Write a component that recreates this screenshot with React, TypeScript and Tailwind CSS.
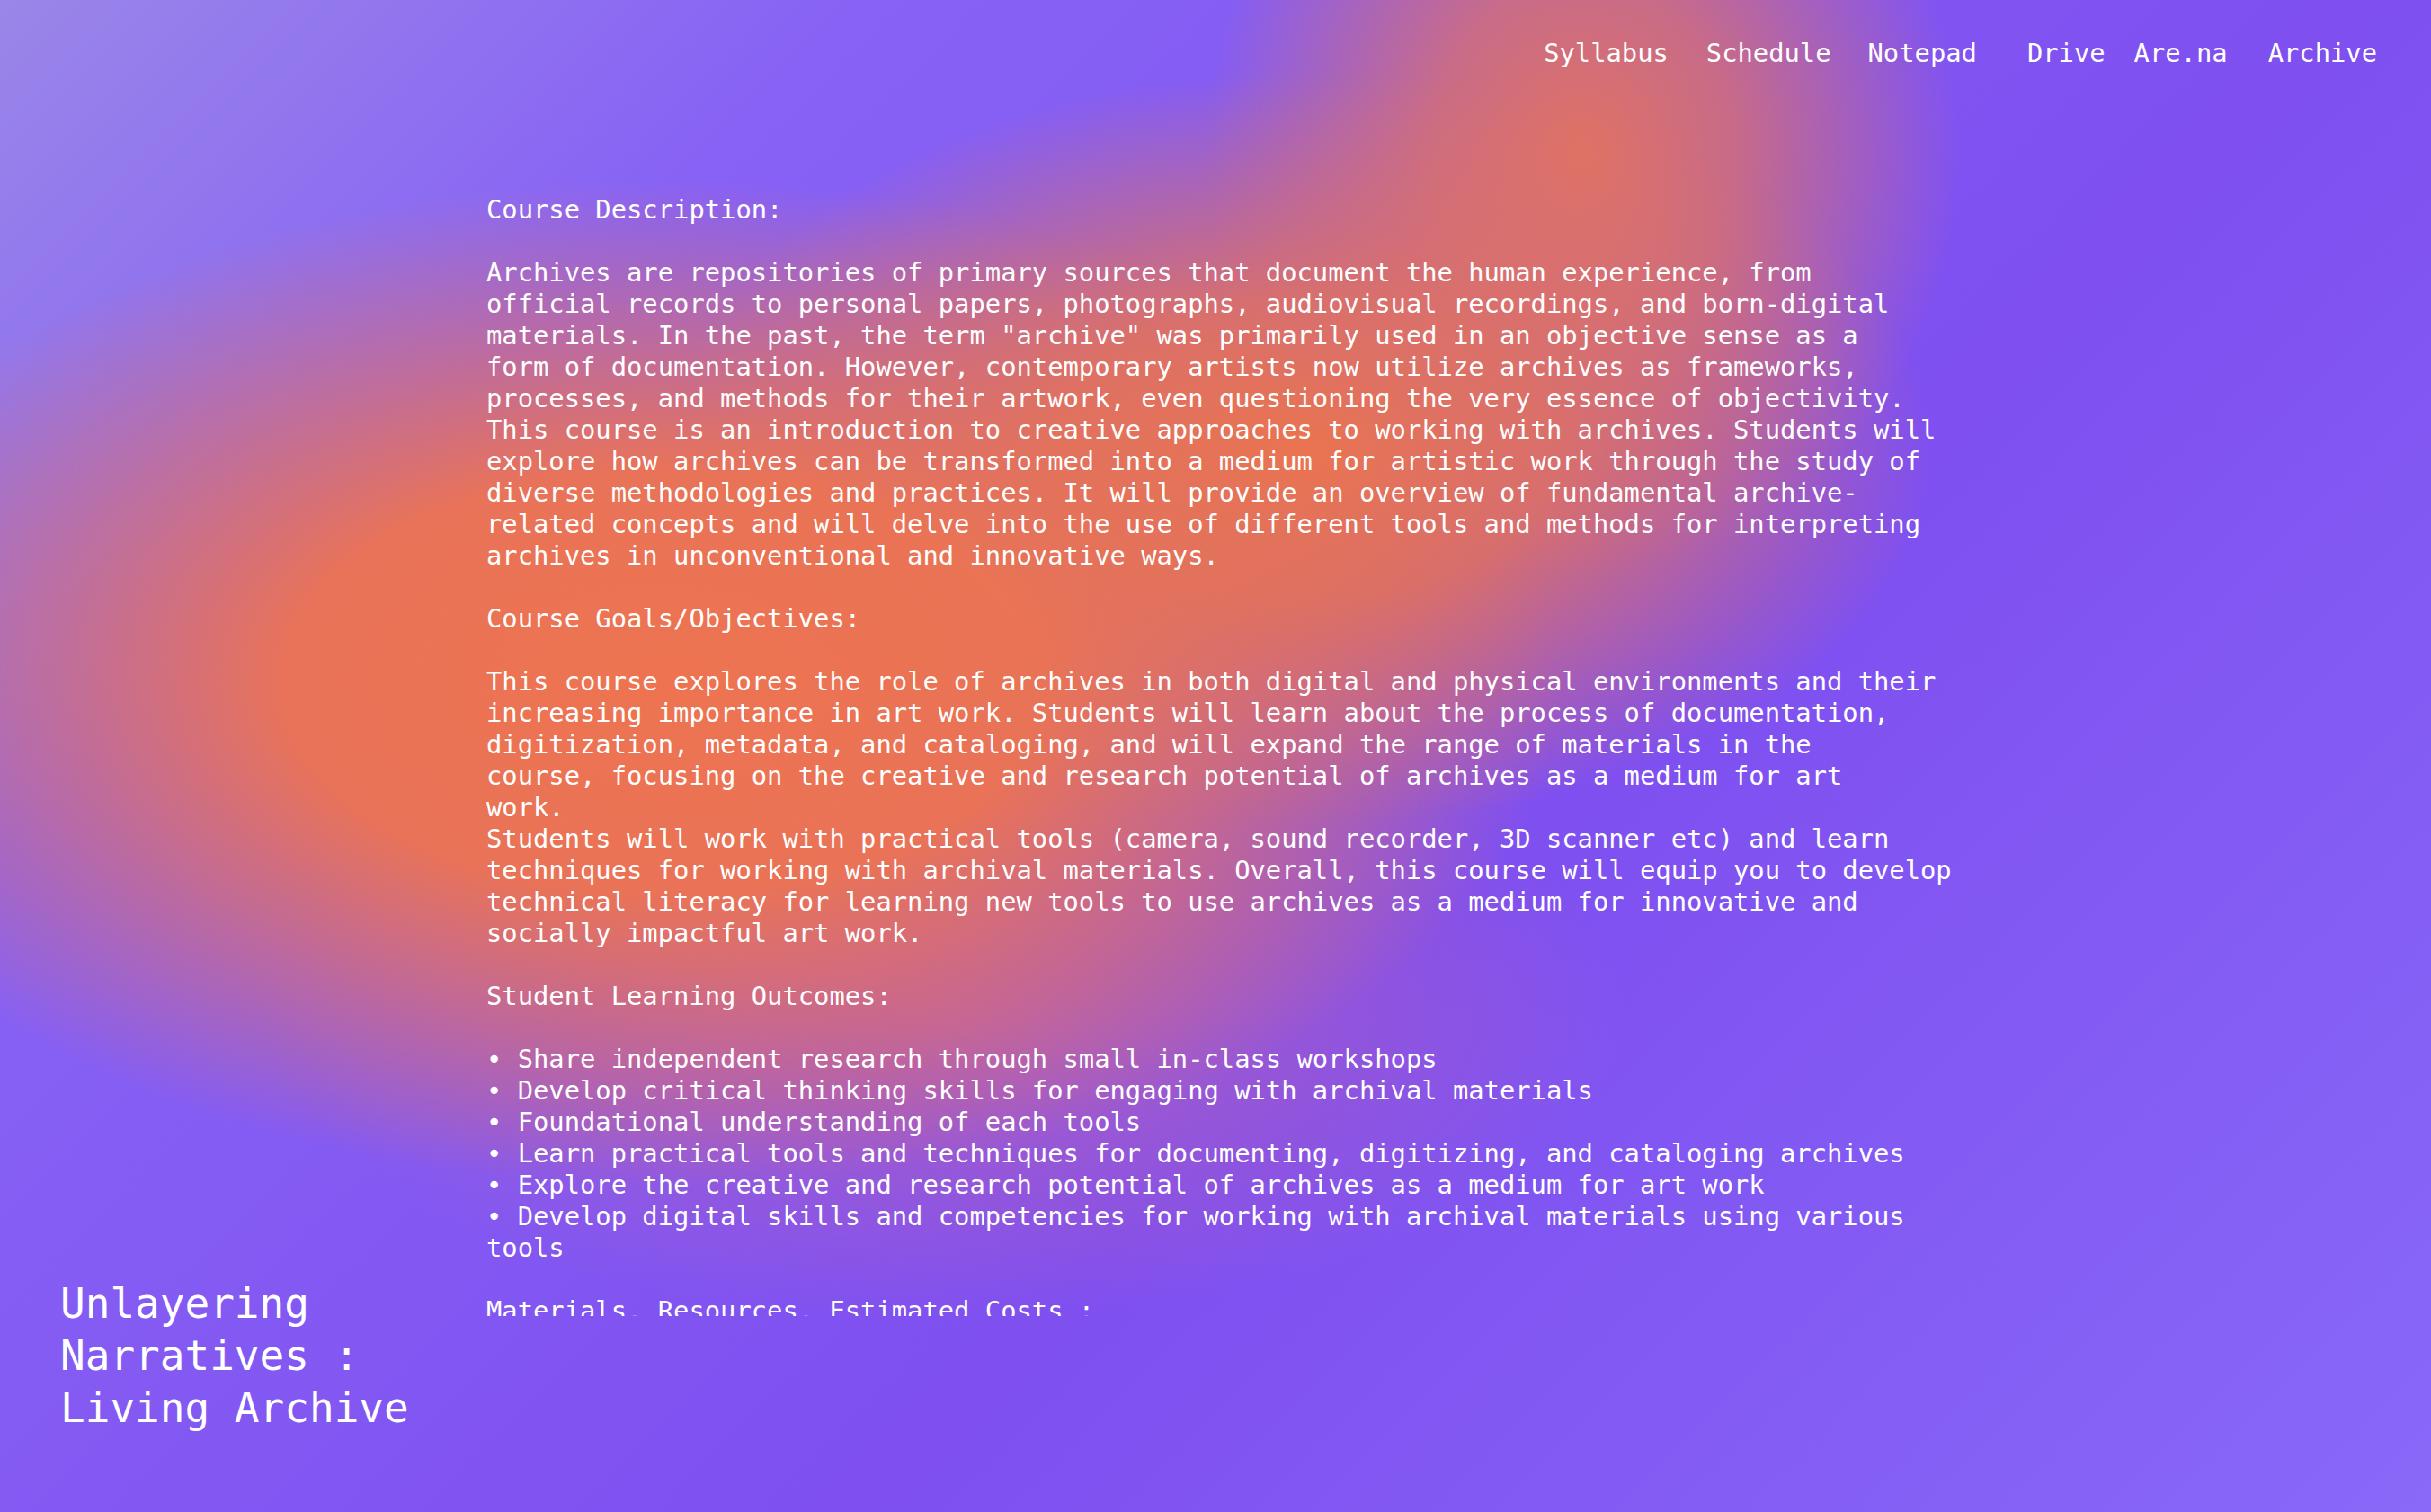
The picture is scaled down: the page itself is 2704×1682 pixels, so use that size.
import React from 'react';

const navLinks = [
  { label: 'Syllabus', cls: '' },
  { label: 'Schedule', cls: 'ml-[42px]' },
  { label: 'Notepad', cls: 'ml-[41px]' },
  { label: 'Drive', cls: 'ml-[56px]' },
  { label: 'Are.na', cls: 'ml-[32px]' },
  { label: 'Archive', cls: 'ml-[45px]' },
];

// syllabus text, kept with the line breaks of the original layout
const syllabus = [
  'Course Description:',
  '',
  'Archives are repositories of primary sources that document the human experience, from',
  'official records to personal papers, photographs, audiovisual recordings, and born-digital',
  'materials. In the past, the term "archive" was primarily used in an objective sense as a',
  'form of documentation. However, contemporary artists now utilize archives as frameworks,',
  'processes, and methods for their artwork, even questioning the very essence of objectivity.',
  'This course is an introduction to creative approaches to working with archives. Students will',
  'explore how archives can be transformed into a medium for artistic work through the study of',
  'diverse methodologies and practices. It will provide an overview of fundamental archive-',
  'related concepts and will delve into the use of different tools and methods for interpreting',
  'archives in unconventional and innovative ways.',
  '',
  'Course Goals/Objectives:',
  '',
  'This course explores the role of archives in both digital and physical environments and their',
  'increasing importance in art work. Students will learn about the process of documentation,',
  'digitization, metadata, and cataloging, and will expand the range of materials in the',
  'course, focusing on the creative and research potential of archives as a medium for art',
  'work.',
  'Students will work with practical tools (camera, sound recorder, 3D scanner etc) and learn',
  'techniques for working with archival materials. Overall, this course will equip you to develop',
  'technical literacy for learning new tools to use archives as a medium for innovative and',
  'socially impactful art work.',
  '',
  'Student Learning Outcomes:',
  '',
  '• Share independent research through small in-class workshops',
  '• Develop critical thinking skills for engaging with archival materials',
  '• Foundational understanding of each tools',
  '• Learn practical tools and techniques for documenting, digitizing, and cataloging archives',
  '• Explore the creative and research potential of archives as a medium for art work',
  '• Develop digital skills and competencies for working with archival materials using various',
  'tools',
  '',
  'Materials, Resources, Estimated Costs :',
  '',
  '• Laptop',
  '• External hard drive',
];

export default function App() {
  return (
    <div className="h-screen w-full overflow-hidden flex flex-col text-white font-['DejaVu_Sans_Mono',monospace] bg-[radial-gradient(ellipse_420px_470px_at_1760px_170px,rgba(224,114,100,1)_0%,rgba(224,114,100,0.75)_40%,rgba(224,114,100,0)_100%),radial-gradient(ellipse_700px_420px_at_1450px_500px,rgba(234,116,80,1)_0%,rgba(234,116,80,0.8)_40%,rgba(234,116,80,0)_100%),radial-gradient(ellipse_1000px_560px_at_740px_760px,rgba(238,116,80,1)_0%,rgba(238,116,80,0.95)_42%,rgba(238,116,80,0)_100%),radial-gradient(ellipse_760px_340px_at_1050px_1130px,rgba(200,100,160,0.6)_0%,rgba(200,100,160,0)_100%),linear-gradient(135deg,#9a86e8_0%,#8762f5_22%,#7f4ff0_60%,#8869f8_100%)]">
      {/* Top nav */}
      <nav className="flex justify-end pt-[42px] pr-[60px] text-[28.8px] leading-[35px]">
        {navLinks.map((l) => (
          <a key={l.label} href="#" className={l.cls}>
            {l.label}
          </a>
        ))}
      </nav>

      <div className="flex flex-1 min-h-0">
        {/* Course title */}
        <aside className="w-[541px] shrink-0 flex flex-col justify-end pl-[67px] pb-[87px]">
          <h1 className="text-[46px] leading-[58px] font-normal">
            Unlayering
            <br />
            Narratives :
            <br />
            Living Archive
          </h1>
        </aside>

        {/* Syllabus text */}
        <main className="mt-[139px] h-[1248px] overflow-hidden text-[28.8px] leading-[35px]">
          {syllabus.map((line, i) => (
            <div key={i} className="whitespace-pre h-[35px]">
              {line || ' '}
            </div>
          ))}
        </main>
      </div>
    </div>
  );
}
